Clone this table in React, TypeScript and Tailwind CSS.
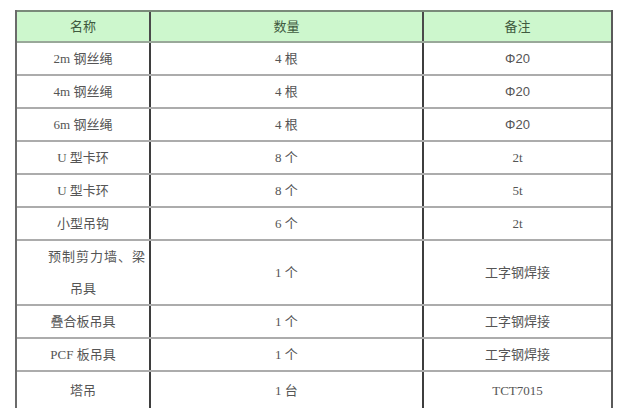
const rows: { name: React.ReactNode; qty: string; note: string; noteSans?: boolean; tall?: boolean }[] = [
  { name: '2m 钢丝绳', qty: '4 根', note: 'Φ20', noteSans: true },
  { name: '4m 钢丝绳', qty: '4 根', note: 'Φ20', noteSans: true },
  { name: '6m 钢丝绳', qty: '4 根', note: 'Φ20', noteSans: true },
  { name: 'U 型卡环', qty: '8 个', note: '2t' },
  { name: 'U 型卡环', qty: '8 个', note: '5t' },
  { name: '小型吊钩', qty: '6 个', note: '2t' },
  {
    name: (
      <div className="flex flex-col items-center leading-[32px]">
        <span className="pl-[28px] tracking-[1px]">预制剪力墙、梁</span>
        <span>吊具</span>
      </div>
    ),
    qty: '1 个',
    note: '工字钢焊接',
    noteSans: true,
    tall: true,
  },
  { name: '叠合板吊具', qty: '1 个', note: '工字钢焊接', noteSans: true },
  { name: 'PCF 板吊具', qty: '1 个', note: '工字钢焊接', noteSans: true },
  { name: '塔吊', qty: '1 台', note: 'TCT7015' },
];

const serif = "font-['Liberation_Serif','Noto_Sans_CJK_SC',serif]";
const sans = "font-['Liberation_Sans','Noto_Sans_CJK_SC',sans-serif]";

export default function App() {
  return (
    <div className="w-[624px] h-[408px] overflow-hidden bg-white pt-[10px] pl-[15px]">
      <div className="w-[598px] border-l-2 border-[#6b6b6b] border-r-2 border-r-[#5a5a5a]">
        {/* header */}
        <div
          className={`flex h-[33px] border-t-2 border-t-[#7a8a7a] border-b-2 border-b-[#9aa89a] bg-[#cdf7cd] text-[13px] text-[#3f5a3f] ${sans}`}
        >
          <div className="w-[134px] flex items-center justify-center border-r-2 border-[#4a4a4a]">名称</div>
          <div className="w-[273px] flex items-center justify-center border-r-2 border-[#4a4a4a]">数量</div>
          <div className="flex-1 flex items-center justify-center">备注</div>
        </div>
        {rows.map((r, i) => (
          <div
            key={i}
            className={`flex ${r.tall ? 'h-[65px]' : i === rows.length - 1 ? 'h-[40px]' : 'h-[33px]'} border-b-2 border-[#acacac] text-[13px] text-[#555]`}
          >
            <div className={`w-[134px] flex items-center justify-center border-r-2 border-[#3e3e3e] ${serif}`}>
              {r.name}
            </div>
            <div className={`w-[273px] flex items-center justify-center border-r-2 border-[#3e3e3e] ${serif}`}>
              {r.qty}
            </div>
            <div className={`flex-1 flex items-center justify-center ${r.noteSans ? sans : serif}`}>{r.note}</div>
          </div>
        ))}
      </div>
    </div>
  );
}
